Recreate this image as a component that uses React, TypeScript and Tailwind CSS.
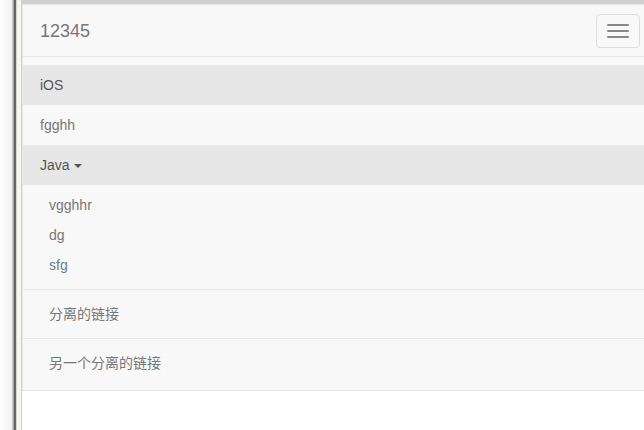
import React from 'react';

const font = { fontFamily: '"Liberation Sans", Arial, "Noto Sans CJK SC", sans-serif' };

const NavLink: React.FC<{ label: React.ReactNode; active?: boolean }> = ({ label, active }) => (
	<div
		className={`h-[40px] flex items-center pl-[17px] text-[14px] ${
			active ? 'bg-[#e7e7e7] text-[#555]' : 'text-[#777]'
		}`}
	>
		{label}
	</div>
);

const DropItem: React.FC<{ label: string; color?: string }> = ({ label, color }) => (
	<div className={`h-[30px] flex items-center pl-[26px] text-[14px] ${color ?? 'text-[#777]'}`}>
		{label}
	</div>
);

const Divider = () => <div className="h-px bg-[#e5e5e5] my-[9px]" />;

export default function App() {
	return (
		<div className="w-[644px] h-[430px] bg-white flex overflow-hidden" style={font}>
			{/* window frame on the left */}
			<div className="w-[12px] bg-gradient-to-r from-white to-[#f2f2f2]" />
			<div className="w-[2px] bg-gradient-to-r from-[#d6d6d6] to-[#9a9a9a]" />
			<div className="w-[2px] bg-[#666]" />
			<div className="w-[1px] bg-[#d4d4d4]" />
			<div className="w-[4px] bg-[#f7f7e9]" />
			<div className="w-[1px] bg-[#cfcfcf]" />

			<div className="flex-1 flex flex-col">
				<div className="h-[4px] bg-[#d0d0d0]" />
				<nav className="bg-[#f8f8f8] border border-r-0 border-[#e7e7e7]">
					<div className="h-[51px] flex items-center justify-between">
						<span className="pl-[17px] pt-[2px] text-[18px] text-[#777]">12345</span>
						<button
							type="button"
							className="mr-[4px] w-[44px] h-[34px] mt-[1px] border border-[#ddd] rounded-[4px] flex flex-col items-center justify-center gap-[4px]"
						>
							<span className="block w-[22px] h-[2px] bg-[#888] rounded-[1px]" />
							<span className="block w-[22px] h-[2px] bg-[#888] rounded-[1px]" />
							<span className="block w-[22px] h-[2px] bg-[#888] rounded-[1px]" />
						</button>
					</div>
					<div className="border-t border-[#e7e7e7] pt-[8px] pb-[7px]">
						<NavLink label="iOS" active />
						<NavLink label="fgghh" />
						<NavLink
							active
							label={
								<span className="flex items-center gap-[4px]">
									Java
									<span className="w-0 h-0 border-l-[4px] border-r-[4px] border-t-[4px] border-l-transparent border-r-transparent border-t-[#555] mt-[1px]" />
								</span>
							}
						/>
						<div className="py-[5px]">
							<DropItem label="vgghhr" />
							<DropItem label="dg" />
							<DropItem label="sfg" color="text-[#647f8c]" />
							<Divider />
							<DropItem label="分离的链接" />
							<Divider />
							<DropItem label="另一个分离的链接" />
						</div>
					</div>
				</nav>
			</div>
		</div>
	);
}
